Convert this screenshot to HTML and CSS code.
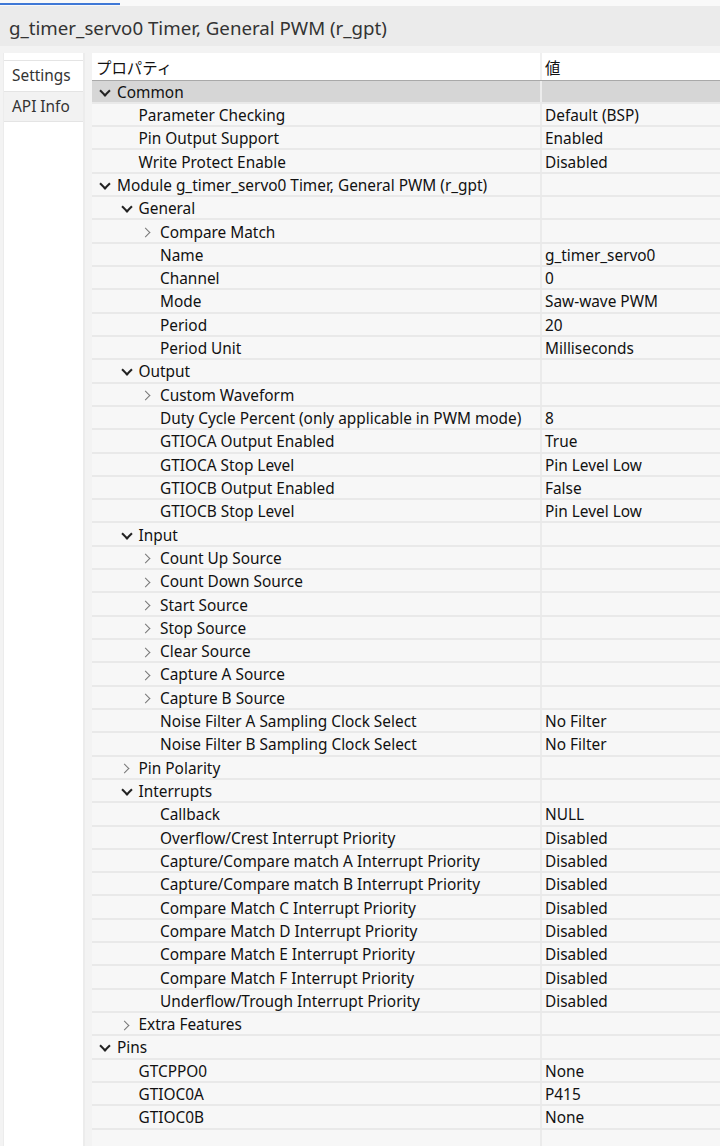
FILE: index.html
```html
<!DOCTYPE html>
<html lang="ja">
<head>
    <meta charset="UTF-8">
    <title>g_timer_servo0 Timer, General PWM (r_gpt)</title>
    <link rel="stylesheet" href="styles.css">
</head>
<body>
    <div class="tab-strip"><div class="tab-active-line"></div></div>

    <div class="title-bar">g_timer_servo0 Timer, General PWM (r_gpt)</div>

    <div class="workspace">
        <div class="side-tabs">
            <div class="side-tab selected">Settings</div>
            <div class="side-tab">API Info</div>
        </div>

        <div class="prop-table">
            <div class="row head">
                <div class="cell name">プロパティ</div>
                <div class="cell val">値</div>
            </div>

            <div class="row selected">
                <div class="cell name lv0"><span class="tw open"></span>Common</div>
                <div class="cell val"></div>
            </div>
            <div class="row"><div class="cell name lv1"><span class="tw"></span>Parameter Checking</div><div class="cell val">Default (BSP)</div></div>
            <div class="row"><div class="cell name lv1"><span class="tw"></span>Pin Output Support</div><div class="cell val">Enabled</div></div>
            <div class="row"><div class="cell name lv1"><span class="tw"></span>Write Protect Enable</div><div class="cell val">Disabled</div></div>

            <div class="row"><div class="cell name lv0"><span class="tw open"></span>Module g_timer_servo0 Timer, General PWM (r_gpt)</div><div class="cell val"></div></div>
            <div class="row"><div class="cell name lv1"><span class="tw open"></span>General</div><div class="cell val"></div></div>
            <div class="row"><div class="cell name lv2"><span class="tw closed"></span>Compare Match</div><div class="cell val"></div></div>
            <div class="row"><div class="cell name lv2"><span class="tw"></span>Name</div><div class="cell val">g_timer_servo0</div></div>
            <div class="row"><div class="cell name lv2"><span class="tw"></span>Channel</div><div class="cell val">0</div></div>
            <div class="row"><div class="cell name lv2"><span class="tw"></span>Mode</div><div class="cell val">Saw-wave PWM</div></div>
            <div class="row"><div class="cell name lv2"><span class="tw"></span>Period</div><div class="cell val">20</div></div>
            <div class="row"><div class="cell name lv2"><span class="tw"></span>Period Unit</div><div class="cell val">Milliseconds</div></div>

            <div class="row"><div class="cell name lv1"><span class="tw open"></span>Output</div><div class="cell val"></div></div>
            <div class="row"><div class="cell name lv2"><span class="tw closed"></span>Custom Waveform</div><div class="cell val"></div></div>
            <div class="row"><div class="cell name lv2"><span class="tw"></span>Duty Cycle Percent (only applicable in PWM mode)</div><div class="cell val">8</div></div>
            <div class="row"><div class="cell name lv2"><span class="tw"></span>GTIOCA Output Enabled</div><div class="cell val">True</div></div>
            <div class="row"><div class="cell name lv2"><span class="tw"></span>GTIOCA Stop Level</div><div class="cell val">Pin Level Low</div></div>
            <div class="row"><div class="cell name lv2"><span class="tw"></span>GTIOCB Output Enabled</div><div class="cell val">False</div></div>
            <div class="row"><div class="cell name lv2"><span class="tw"></span>GTIOCB Stop Level</div><div class="cell val">Pin Level Low</div></div>

            <div class="row"><div class="cell name lv1"><span class="tw open"></span>Input</div><div class="cell val"></div></div>
            <div class="row"><div class="cell name lv2"><span class="tw closed"></span>Count Up Source</div><div class="cell val"></div></div>
            <div class="row"><div class="cell name lv2"><span class="tw closed"></span>Count Down Source</div><div class="cell val"></div></div>
            <div class="row"><div class="cell name lv2"><span class="tw closed"></span>Start Source</div><div class="cell val"></div></div>
            <div class="row"><div class="cell name lv2"><span class="tw closed"></span>Stop Source</div><div class="cell val"></div></div>
            <div class="row"><div class="cell name lv2"><span class="tw closed"></span>Clear Source</div><div class="cell val"></div></div>
            <div class="row"><div class="cell name lv2"><span class="tw closed"></span>Capture A Source</div><div class="cell val"></div></div>
            <div class="row"><div class="cell name lv2"><span class="tw closed"></span>Capture B Source</div><div class="cell val"></div></div>
            <div class="row"><div class="cell name lv2"><span class="tw"></span>Noise Filter A Sampling Clock Select</div><div class="cell val">No Filter</div></div>
            <div class="row"><div class="cell name lv2"><span class="tw"></span>Noise Filter B Sampling Clock Select</div><div class="cell val">No Filter</div></div>

            <div class="row"><div class="cell name lv1"><span class="tw closed"></span>Pin Polarity</div><div class="cell val"></div></div>

            <div class="row"><div class="cell name lv1"><span class="tw open"></span>Interrupts</div><div class="cell val"></div></div>
            <div class="row"><div class="cell name lv2"><span class="tw"></span>Callback</div><div class="cell val">NULL</div></div>
            <div class="row"><div class="cell name lv2"><span class="tw"></span>Overflow/Crest Interrupt Priority</div><div class="cell val">Disabled</div></div>
            <div class="row"><div class="cell name lv2"><span class="tw"></span>Capture/Compare match A Interrupt Priority</div><div class="cell val">Disabled</div></div>
            <div class="row"><div class="cell name lv2"><span class="tw"></span>Capture/Compare match B Interrupt Priority</div><div class="cell val">Disabled</div></div>
            <div class="row"><div class="cell name lv2"><span class="tw"></span>Compare Match C Interrupt Priority</div><div class="cell val">Disabled</div></div>
            <div class="row"><div class="cell name lv2"><span class="tw"></span>Compare Match D Interrupt Priority</div><div class="cell val">Disabled</div></div>
            <div class="row"><div class="cell name lv2"><span class="tw"></span>Compare Match E Interrupt Priority</div><div class="cell val">Disabled</div></div>
            <div class="row"><div class="cell name lv2"><span class="tw"></span>Compare Match F Interrupt Priority</div><div class="cell val">Disabled</div></div>
            <div class="row"><div class="cell name lv2"><span class="tw"></span>Underflow/Trough Interrupt Priority</div><div class="cell val">Disabled</div></div>

            <div class="row"><div class="cell name lv1"><span class="tw closed"></span>Extra Features</div><div class="cell val"></div></div>

            <div class="row"><div class="cell name lv0"><span class="tw open"></span>Pins</div><div class="cell val"></div></div>
            <div class="row"><div class="cell name lv1"><span class="tw"></span>GTCPPO0</div><div class="cell val">None</div></div>
            <div class="row"><div class="cell name lv1"><span class="tw"></span>GTIOC0A</div><div class="cell val">P415</div></div>
            <div class="row"><div class="cell name lv1"><span class="tw"></span>GTIOC0B</div><div class="cell val">None</div></div>

            <div class="row filler">
                <div class="cell name"></div>
                <div class="cell val"></div>
            </div>
        </div>
    </div>
</body>
</html>
```

FILE: styles.css
```css
* {
    margin: 0;
    padding: 0;
    box-sizing: border-box;
}

body {
    width: 720px;
    height: 1146px;
    overflow: hidden;
    background: #f3f3f3;
    font-family: 'Noto Sans', 'Noto Sans CJK JP', sans-serif;
    font-size: 15.4px;
    color: #111;
    display: flex;
    flex-direction: column;
}

/* editor tab strip with the active tab underline */
.tab-strip {
    height: 6px;
    background: #f9f9f9;
    padding-top: 3px;
}

.tab-active-line {
    width: 120px;
    height: 2px;
    background: #3f78d6;
}

.title-bar {
    height: 40px;
    background: #ebebeb;
    color: #333;
    font-size: 18.7px;
    line-height: 44px;
    padding-left: 9px;
}

.workspace {
    flex: 1;
    display: flex;
    padding: 7px 0 0 3px;
    min-height: 0;
}

/* vertical Settings / API Info tabs */
.side-tabs {
    width: 82px;
    background: #fff;
    padding-top: 7px;
    border-left: 1px solid #ececec;
    border-right: 2px solid #ececec;
    margin-right: 7px;
}

.side-tab {
    height: 31px;
    line-height: 29px;
    padding-left: 8px;
    color: #333;
    background: #f2f2f2;
    border-top: 1px solid #e4e4e4;
    border-bottom: 1px solid #e4e4e4;
}

.side-tab.selected {
    background: #fff;
    border-bottom: none;
}

/* property tree table */
.prop-table {
    flex: 1;
    display: flex;
    flex-direction: column;
    background: #f7f7f7;
}

.row {
    display: grid;
    grid-template-columns: 448px 1fr;
    height: 23.32px;
    border-bottom: 2px solid #e9e9e9;
}

.row.head {
    height: 27.5px;
    background: #fff;
    border-bottom: 1px solid #a9a9a9;
}

.row.selected {
    background: #d6d6d6;
}

.row.filler {
    flex: 1;
    border-bottom: none;
}

.cell {
    display: flex;
    align-items: center;
    padding-top: 2px;
    white-space: nowrap;
    overflow: hidden;
}

.cell.val {
    border-left: 2px solid #ebebeb;
    padding-left: 3px;
}

.row.head .cell.name {
    padding-left: 4px;
}

.row.head .cell.val {
    border-left-color: #f0f0f0;
}

.row.selected .cell.val {
    border-left-color: #ececec;
}

.lv0 { padding-left: 8px; }
.lv1 { padding-left: 29.5px; }
.lv2 { padding-left: 51px; }

/* expand / collapse twisty */
.tw {
    width: 17px;
    height: 16px;
    flex: none;
    position: relative;
}

.tw.open::before,
.tw.closed::before {
    content: '';
    position: absolute;
    width: 6px;
    height: 6px;
    border-right: 2px solid #222;
    border-bottom: 2px solid #222;
}

.tw.open::before {
    left: 1px;
    top: 2.5px;
    transform: rotate(45deg);
}

.tw.closed::before {
    left: -1px;
    top: 5px;
    border-color: #777;
    border-width: 1.5px;
    transform: rotate(-45deg);
}
```
